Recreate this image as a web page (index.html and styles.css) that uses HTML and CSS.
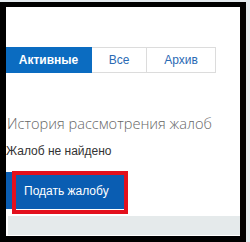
FILE: index.html
```html
<!DOCTYPE html>
<html>
<head>
  <meta charset="UTF-8">
  <title>Жалобы</title>
  <link rel="stylesheet" href="styles.css">
</head>
<body>
  <div class="frame">
    <div class="page">
      <div class="tabs">
        <span class="tab tab-active">Активные</span>
        <span class="tab tab-all">Все</span>
        <span class="tab tab-archive">Архив</span>
      </div>
      <h2 class="title">История рассмотрения жалоб</h2>
      <p class="empty">Жалоб не найдено</p>
      <div class="action">
        <button class="btn">Подать жалобу</button>
        <span class="mark"></span>
      </div>
      <div class="band"></div>
    </div>
  </div>
</body>
</html>
```

FILE: styles.css
```css
body {
  margin: 0;
  background-color: #e4eaee;
  font-family: "Liberation Sans", Arial, sans-serif;
}

.frame {
  width: 246px;
  height: 240px;
  margin-top: 2px;
  box-sizing: border-box;
  border: 5px solid #000;
  border-left-width: 6px;
  border-right-width: 6px;
  border-bottom-width: 6px;
  overflow: hidden;
}

.page {
  height: 100%;
  background-color: #fff;
  display: flex;
  flex-direction: column;
}

.tabs {
  display: flex;
  margin-top: 40px;
  height: 26px;
}

.tab {
  display: flex;
  align-items: center;
  justify-content: center;
  box-sizing: border-box;
  font-size: 12px;
  color: #2a6ab4;
  border: 1px solid #dcdcdc;
  border-left: none;
}

.tab-active {
  width: 86px;
  background-color: #0b6cc1;
  border-color: #0b6cc1;
  color: #fff;
  font-weight: bold;
}

.tab-all {
  width: 55px;
}

.tab-archive {
  width: 69px;
}

.title {
  margin: 41px 0 0 1px;
  font-family: "Open Sans", sans-serif;
  font-weight: 300;
  font-size: 14.6px;
  line-height: 18px;
  color: #666;
}

.empty {
  margin: 12px 0 0 0;
  font-size: 12px;
  line-height: 14px;
  color: #333;
}

.action {
  position: relative;
  margin-top: 14px;
  height: 42px;
}

.btn {
  display: block;
  width: 118px;
  height: 37px;
  padding: 0 0 0 18px;
  border: none;
  background-color: #0a5db2;
  color: #fff;
  font-family: "Liberation Sans", Arial, sans-serif;
  font-size: 12px;
  text-align: left;
}

.mark {
  position: absolute;
  left: 6px;
  top: -1px;
  width: 116px;
  height: 43px;
  box-sizing: border-box;
  border: 4px solid #e3101d;
}

.band {
  margin: 2px 0 1px 2px;
  flex: 1;
  background-color: #e5eaeb;
}
```
